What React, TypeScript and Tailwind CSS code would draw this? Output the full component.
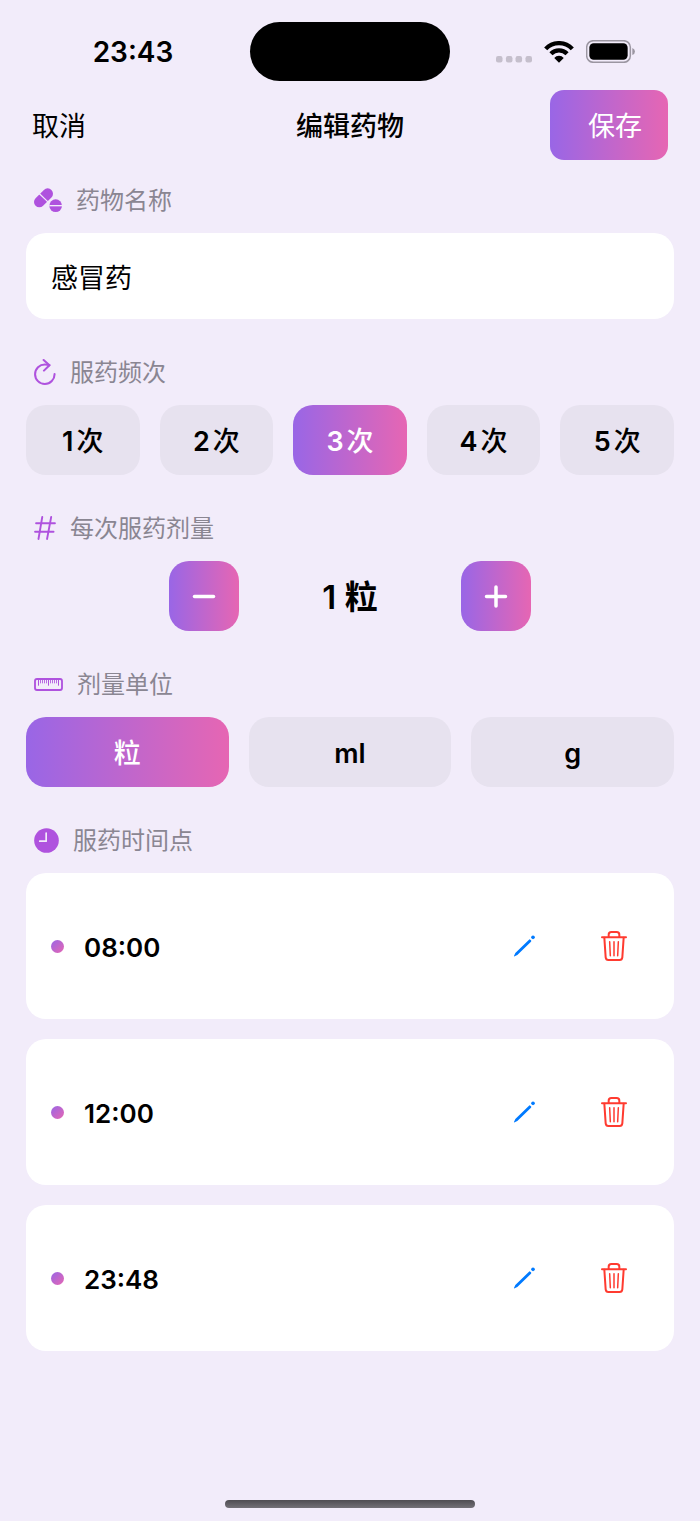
import React, { useState } from 'react';

interface SectionProps {
  title: string;
  icon: React.ReactNode;
  htmlFor?: string;
  children: React.ReactNode;
}

interface OptionButtonProps {
  active: boolean;
  onClick: () => void;
  children: React.ReactNode;
}

const PillsIcon = () => (
  <svg width="28" height="24" viewBox="0 0 84 72" fill="none" aria-hidden="true">
    <path d="M16 42 41 17" stroke="#af52de" strokeWidth="32" strokeLinecap="round" />
    <path d="M14 15 44 44" stroke="#f2ecfa" strokeWidth="3.5" />
    <circle cx="65" cy="53" r="19" fill="#af52de" />
    <path d="M46 53h38" stroke="#f2ecfa" strokeWidth="4" />
  </svg>
);

const RepeatIcon = () => (
  <svg width="22" height="26" viewBox="0 0 64 76" fill="none" stroke="#af52de" strokeWidth="6" strokeLinecap="round" strokeLinejoin="round" aria-hidden="true">
    <path d="M60 44A28.5 28.5 0 1 1 32 16Q39 16 45 18" />
    <path d="M28 3 45 18 29 34" />
  </svg>
);

const HashIcon = () => (
  <svg width="22" height="24" viewBox="0 0 64 70" fill="none" stroke="#af52de" strokeWidth="5.5" strokeLinecap="round" aria-hidden="true">
    <path d="M24 3 13 67M50 3 38 67M6 21h55M3 46h54" />
  </svg>
);

const RulerIcon = () => (
  <svg width="29" height="13" viewBox="0 0 87 39" fill="none" stroke="#af52de" aria-hidden="true">
    <rect x="3" y="3" width="81" height="33" rx="6" strokeWidth="5.5" />
    <path d="M13.5 5v18M43.5 5v18M73.5 5v18" strokeWidth="3" />
    <path d="M19.5 5v11M25.5 5v11M31.5 5v11M37.5 5v11M49.5 5v11M55.5 5v11M61.5 5v11M67.5 5v11" strokeWidth="2.5" />
  </svg>
);

const ClockIcon = () => (
  <svg width="25" height="25" viewBox="0 0 74 74" fill="none" aria-hidden="true">
    <circle cx="37" cy="37" r="36.5" fill="#af52de" />
    <path d="M36 15v24H17" stroke="#f2ecfa" strokeWidth="5" strokeLinecap="round" strokeLinejoin="round" />
  </svg>
);

const PencilIcon = () => (
  <svg width="22" height="22" viewBox="0 0 66 66" fill="#007aff" aria-hidden="true">
    <path d="M3 63 7 54 48 14Q50 12 52 14L54 16Q56 18 54 20L13 60 5 64Q2 65 3 63Z" />
    <circle cx="60" cy="7" r="5.5" />
  </svg>
);

const TrashIcon = () => (
  <svg width="26" height="30" viewBox="0 0 78 90" fill="none" stroke="#ff3b30" strokeWidth="6" strokeLinecap="round" strokeLinejoin="round" aria-hidden="true">
    <path d="M3 19h72" />
    <path d="M23 18v-7q0-8 8-8h16q8 0 8 8v7" />
    <path d="M10 20 14 79q1 8 8 8h34q7 0 8-8L68 20" />
    <path d="M26 32 28 74M39 32v42M52 32 50 74" strokeWidth="4.5" />
  </svg>
);

const StatusBar = () => (
  <div className="grid grid-cols-[1fr_200px_1fr] items-center pt-[22px] pb-[9px]">
    <div className="pt-px pl-4 text-center text-[28px] leading-8 font-semibold">23:43</div>
    <div className="h-[59px] rounded-full bg-black" />
    <div className="flex items-end justify-center gap-3 pr-5">
      <svg width="36" height="7" viewBox="0 0 105 20" fill="#c5bfcc" aria-hidden="true">
        <rect x="0" y="0" width="19" height="19" rx="6" />
        <rect x="29" y="0" width="19" height="19" rx="6" />
        <rect x="57" y="0" width="19" height="19" rx="6" />
        <rect x="86" y="0" width="19" height="19" rx="6" />
      </svg>
      <svg width="30" height="22" viewBox="0 0 91 67" fill="none" stroke="#000" strokeWidth="13" aria-hidden="true">
        <path d="M5 24A55.5 55.5 0 0 1 86 24" />
        <path d="M21 39A33.5 33.5 0 0 1 70 39" />
        <path d="M45.5 66 31 51.5A20 20 0 0 1 60 51.5Z" fill="#000" stroke="none" />
      </svg>
      <svg width="49" height="23" viewBox="0 0 147 69" fill="none" aria-hidden="true">
        <rect x="2" y="2" width="131" height="65" rx="20" stroke="#9b96a1" strokeWidth="4.5" />
        <rect x="10" y="10" width="115" height="49" rx="13" fill="#000" />
        <path d="M139 24q8 3 8 10.5t-8 10.5z" fill="#9b96a1" />
      </svg>
    </div>
  </div>
);

const Section: React.FC<SectionProps> = ({ title, icon, htmlFor, children }) => (
  <section className="flex flex-col gap-[14px]">
    <div className="flex h-[38px] items-center gap-[14px] pl-2 text-2xl text-[#8a8692]">
      {icon}
      {htmlFor ? <label htmlFor={htmlFor} className="pt-[2px]">{title}</label> : <h2 className="pt-[2px]">{title}</h2>}
    </div>
    {children}
  </section>
);

const OptionButton: React.FC<OptionButtonProps> = ({ active, onClick, children }) => (
  <button
    type="button"
    aria-pressed={active}
    onClick={onClick}
    className={`flex h-[70px] flex-1 items-center justify-center gap-[3px] rounded-[20px] pt-1 text-[27px] font-medium ${active ? 'bg-linear-to-r/srgb from-[#9966e6] to-[#e666b3] text-white' : 'bg-[#e7e2ef] text-black'}`}
  >
    {children}
  </button>
);

const App: React.FC = () => {
  const [name, setName] = useState('感冒药');
  const [frequency, setFrequency] = useState(3);
  const [dosage, setDosage] = useState(1);
  const [unit, setUnit] = useState('粒');
  const [times, setTimes] = useState(['08:00', '12:00', '23:48']);

  const stepButton = 'flex size-[70px] items-center justify-center rounded-[20px] bg-linear-to-r/srgb from-[#9966e6] to-[#e666b3]';

  return (
    <div className="flex min-h-screen flex-col bg-[#f2ecfa] font-[Inter,'Noto_Sans_CJK_SC',sans-serif] text-black">
      <StatusBar />

      <header className="grid grid-cols-3 items-center px-8 text-[27px]">
        <button type="button" className="justify-self-start pt-1">取消</button>
        <h1 className="pt-1 text-center font-medium">编辑药物</h1>
        <button type="button" className="h-[70px] justify-self-end rounded-[14px] bg-linear-to-r/srgb from-[#9966e6] to-[#e666b3] pt-1 pr-[26px] pl-[38px] text-white">
          保存
        </button>
      </header>

      <main className="flex flex-col gap-[34px] px-[26px] pt-[21px] pb-10">
        <Section title="药物名称" icon={<PillsIcon />} htmlFor="med-name">
          <input
            id="med-name"
            type="text"
            value={name}
            onChange={e => setName(e.target.value)}
            className="h-[86px] w-full rounded-[20px] bg-white px-[25px] text-[27px] outline-none"
          />
        </Section>

        <Section title="服药频次" icon={<RepeatIcon />}>
          <div className="flex gap-5">
            {[1, 2, 3, 4, 5].map(n => (
              <OptionButton key={n} active={frequency === n} onClick={() => setFrequency(n)}>
                <span className="font-semibold">{n}</span>
                <span>次</span>
              </OptionButton>
            ))}
          </div>
        </Section>

        <Section title="每次服药剂量" icon={<HashIcon />}>
          <div className="flex items-center justify-center">
            <button type="button" aria-label="减少" onClick={() => setDosage(Math.max(1, dosage - 1))} className={stepButton}>
              <svg width="24" height="24" viewBox="0 0 24 24" stroke="#fff" strokeWidth="3.5" strokeLinecap="round" aria-hidden="true">
                <path d="M2.5 12.5h19" />
              </svg>
            </button>
            <div className="w-[222px] pt-1 text-center text-[33px] font-semibold">{dosage} {unit}</div>
            <button type="button" aria-label="增加" onClick={() => setDosage(dosage + 1)} className={stepButton}>
              <svg width="24" height="24" viewBox="0 0 24 24" stroke="#fff" strokeWidth="3.5" strokeLinecap="round" aria-hidden="true">
                <path d="M2.5 12.5h19M12 3v19" />
              </svg>
            </button>
          </div>
        </Section>

        <Section title="剂量单位" icon={<RulerIcon />}>
          <div className="flex gap-5">
            {['粒', 'ml', 'g'].map(u => (
              <OptionButton key={u} active={unit === u} onClick={() => setUnit(u)}>
                <span className={u === '粒' ? 'font-medium' : 'font-semibold'}>{u}</span>
              </OptionButton>
            ))}
          </div>
        </Section>

        <Section title="服药时间点" icon={<ClockIcon />}>
          <ul className="flex flex-col gap-5">
            {times.map(time => (
              <li key={time} className="flex items-center gap-5 rounded-[20px] bg-white px-[25px] py-[38px]">
                <span className="size-[13px] rounded-full bg-linear-to-br/srgb from-[#9966e6] to-[#e666b3]" />
                <span className="flex-1 pt-[2px] text-[26px] font-semibold">{time}</span>
                <button type="button" aria-label={`编辑 ${time}`} className="flex size-[70px] items-center justify-center">
                  <PencilIcon />
                </button>
                <button
                  type="button"
                  aria-label={`删除 ${time}`}
                  onClick={() => setTimes(times.filter(t => t !== time))}
                  className="flex size-[70px] items-center justify-center"
                >
                  <TrashIcon />
                </button>
              </li>
            ))}
          </ul>
        </Section>
      </main>

      <div className="mx-auto mt-auto mb-[13px] h-2 w-[250px] rounded-full bg-linear-to-b from-[#4f4d52] to-[#737077]" />
    </div>
  );
};

export default App;
